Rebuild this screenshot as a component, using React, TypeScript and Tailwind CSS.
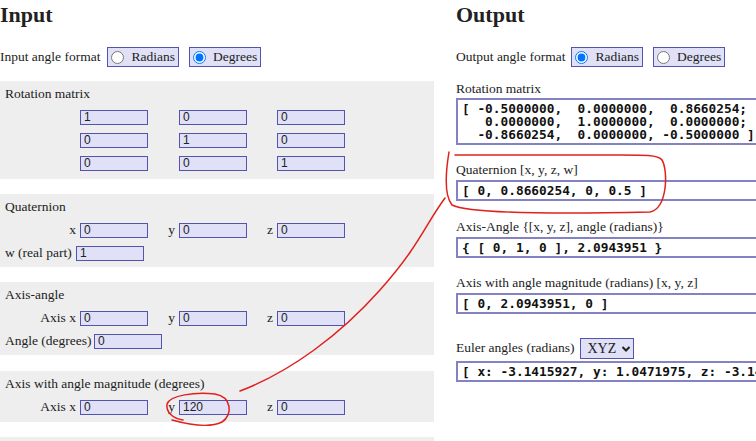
import React from 'react';

const serif = "font-['Liberation_Serif','Times_New_Roman',serif]";
const mono = "font-['DejaVu_Sans_Mono','Liberation_Mono',monospace]";

const Box: React.FC<{ value?: string; w?: string }> = ({ value = '0', w = 'w-[68px]' }) => (
  <div className={`${w} h-[15px] shrink-0 border border-[#5454ae] bg-[#e0e0f6] pl-[3px] text-[12px] leading-[13px] text-[#222] font-['Liberation_Sans',Arial,sans-serif]`}>
    {value}
  </div>
);

const Radio: React.FC<{ label: string; checked?: boolean }> = ({ label, checked }) => (
  <label className="flex items-center h-[20px] border border-[#5454ae] bg-[#e0e0f6] pl-[3px] pr-[3px]">
    <input type="radio" checked={!!checked} readOnly className="m-0 w-[13px] h-[13px] mr-[7px]" />
    <span>{label}</span>
  </label>
);

// one line of three labelled fields, label cells right-aligned up to the input
const Triple: React.FC<{ labels: string[]; values: string[] }> = ({ labels, values }) => (
  <div className="flex items-center h-[15px]">
    <span className="w-[75px] text-right pr-[4px]">{labels[0]}</span>
    <Box value={values[0]} />
    <span className="w-[31px] text-right pr-[4px]">{labels[1]}</span>
    <Box value={values[1]} />
    <span className="w-[30px] text-right pr-[4px]">{labels[2]}</span>
    <Box value={values[2]} />
  </div>
);

const Panel: React.FC<{ title: string; children: React.ReactNode; pb?: string }> = ({ title, children, pb = 'pb-[8px]' }) => (
  <div className={`bg-[#eeeeee] px-[5px] pt-[5px] ${pb}`}>
    <div className="h-[16px] leading-[16px]">{title}</div>
    <div className="mt-[8px] flex flex-col gap-[8px]">{children}</div>
  </div>
);

const Out: React.FC<{ children: React.ReactNode }> = ({ children }) => (
  <pre className={`${mono} font-bold text-[12.8px] leading-[13px] border-2 border-[#8282c4] bg-white px-[4px] py-[2px] w-[420px] whitespace-pre text-[#111]`}>
    {children}
  </pre>
);

export default function App() {
  return (
    <div className={`relative w-[756px] h-[441px] overflow-hidden bg-white text-[#222] text-[13.5px] ${serif}`}>
      <div className="flex">
        <div className="w-[434px] shrink-0">
          <h1 className="text-[22px] font-bold leading-[28px] pt-[1px]">Input</h1>
          <div className="flex items-center mt-[18px] h-[20px]">
            <span className="mr-[7px]">Input angle format</span>
            <Radio label="Radians" />
            <div className="w-[10px]" />
            <Radio label="Degrees" checked />
          </div>

          <div className="mt-[14px]">
            <Panel title="Rotation matrix">
              <Triple labels={['', '', '']} values={['1', '0', '0']} />
              <Triple labels={['', '', '']} values={['0', '1', '0']} />
              <Triple labels={['', '', '']} values={['0', '0', '1']} />
            </Panel>
          </div>

          <div className="mt-[15px]">
            <Panel title="Quaternion" pb="pb-[6px]">
              <Triple labels={['x', 'y', 'z']} values={['0', '0', '0']} />
              <div className="flex items-center h-[15px]">
                <span className="w-[71px]">w (real part)</span>
                <Box value="1" />
              </div>
            </Panel>
          </div>

          <div className="mt-[15px]">
            <Panel title="Axis-angle" pb="pb-[6px]">
              <Triple labels={['Axis x', 'y', 'z']} values={['0', '0', '0']} />
              <div className="flex items-center h-[15px]">
                <span className="w-[89px] whitespace-nowrap">Angle (degrees)</span>
                <Box value="0" />
              </div>
            </Panel>
          </div>

          <div className="mt-[16px]">
            <Panel title="Axis with angle magnitude (degrees)" pb="pb-[7px]">
              <Triple labels={['Axis x', 'y', 'z']} values={['0', '120', '0']} />
            </Panel>
          </div>

          <div className="mt-[15px] bg-[#eeeeee] h-[40px]" />
        </div>

        <div className="ml-[22px] w-[420px] shrink-0">
          <h1 className="text-[22px] font-bold leading-[28px] pt-[1px]">Output</h1>
          <div className="flex items-center mt-[18px] h-[20px]">
            <span className="mr-[6px]">Output angle format</span>
            <Radio label="Radians" checked />
            <div className="w-[10px]" />
            <Radio label="Degrees" />
          </div>

          <div className="mt-[14px] h-[16px] leading-[16px]">Rotation matrix</div>
          <div className="mt-[1px]">
            <Out>{`[ -0.5000000,  0.0000000,  0.8660254;
   0.0000000,  1.0000000,  0.0000000;
  -0.8660254,  0.0000000, -0.5000000 ]`}</Out>
          </div>

          <div className="mt-[17px] h-[16px] leading-[16px]">Quaternion [x, y, z, w]</div>
          <div className="mt-[2px]">
            <Out>{'[ 0, 0.8660254, 0, 0.5 ]'}</Out>
          </div>

          <div className="mt-[18px] h-[16px] leading-[16px]">Axis-Angle {'{'}[x, y, z], angle (radians){'}'}</div>
          <div className="mt-[2px]">
            <Out>{'{ [ 0, 1, 0 ], 2.0943951 }'}</Out>
          </div>

          <div className="mt-[17px] h-[16px] leading-[16px]">Axis with angle magnitude (radians) [x, y, z]</div>
          <div className="mt-[2px]">
            <Out>{'[ 0, 2.0943951, 0 ]'}</Out>
          </div>

          <div className="mt-[24px] flex items-center h-[21px]">
            <span className="mr-[6px]">Euler angles (radians)</span>
            <div className="flex items-center h-[21px] w-[54px] border border-[#5454ae] bg-[#e0e0f6] pl-[6px] text-[14px]">
              <span>XYZ</span>
              <svg className="ml-[5px]" width="10" height="8" viewBox="0 0 10 8">
                <path d="M1.5 2l3.5 3.5L8.5 2" fill="none" stroke="#222" strokeWidth="2" />
              </svg>
            </div>
          </div>
          <div className="mt-[2px]">
            <Out>{'[ x: -3.1415927, y: 1.0471975, z: -3.1415927 ]'}</Out>
          </div>
        </div>
      </div>

      <svg className="absolute inset-0 pointer-events-none" width="756" height="441" viewBox="0 0 756 441">
        <g fill="none" stroke="#e0201c" strokeWidth="1.5" strokeLinecap="round">
          <path d="M449 152 C446 170, 444 195, 452 205 C470 214, 560 214, 650 212 C668 208, 668 170, 662 160 C658 154, 640 155, 600 155 L455 155" />
          <path d="M240 391 C290 372, 340 335, 380 290 S425 225, 445 198" />
          <path d="M183 420 C172 418, 166 412, 167 404 C170 395, 195 392, 215 394 C232 397, 233 415, 222 422 C210 428, 190 425, 172 420" />
        </g>
      </svg>
    </div>
  );
}
